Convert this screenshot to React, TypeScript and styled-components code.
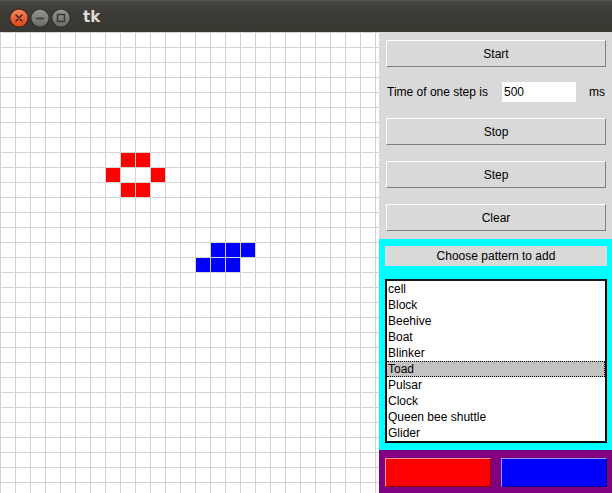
import React from "react";
import styled, { createGlobalStyle } from "styled-components";

const Global = createGlobalStyle`
  html, body { margin: 0; padding: 0; background: #d9d9d9; }
  body { width: 612px; height: 493px; overflow: hidden; font-family: "Liberation Sans", Arial, sans-serif; }
  * { box-sizing: border-box; }
`;

const Window = styled.div`
  width: 612px;
  height: 493px;
  display: flex;
  flex-direction: column;
`;

const TitleBar = styled.div`
  height: 32px;
  flex: none;
  display: flex;
  align-items: center;
  padding: 2px 0 0 9px;
  background: linear-gradient(#46453f, #3c3b37 40%, #37362f);
  border-top: 1px solid #55544f;
`;

const WinButtons = styled.div`
  display: flex;
  gap: 1px;
`;

const Title = styled.span`
  margin-left: 12px;
  margin-top: -2px;
  color: #dfdbd2;
  font-family: "DejaVu Sans", sans-serif;
  font-weight: bold;
  font-size: 15px;
`;

const Body = styled.div`
  flex: 1;
  display: flex;
  min-height: 0;
`;

const Board = styled.div`
  width: 379px;
  height: 461px;
  flex: none;
  overflow: hidden;
  display: grid;
  grid-template-columns: repeat(26, 15px);
  grid-template-rows: repeat(31, 15px);
  background-color: #ffffff;
  background-image: linear-gradient(to right, #d3d3d3 1px, transparent 1px),
    linear-gradient(to bottom, #d3d3d3 1px, transparent 1px);
  background-size: 15px 15px;
`;

const Cell = styled.div<{ $color: string }>`
  width: 14px;
  height: 14px;
  margin: 1px 0 0 1px;
  background: ${(p) => p.$color};
`;

const Panel = styled.div`
  flex: 1;
  display: flex;
  flex-direction: column;
  background: #d9d9d9;
  padding-top: 8px;
`;

const Controls = styled.div`
  display: flex;
  flex-direction: column;
  gap: 16px;
  padding: 0 7px 0 7px;
`;

const Button = styled.div`
  width: 220px;
  height: 27px;
  display: flex;
  align-items: center;
  justify-content: center;
  font-size: 12px;
  color: #000;
  background: #d9d9d9;
  border-top: 1px solid #ffffff;
  border-left: 1px solid #ffffff;
  border-right: 1px solid #7f7f7f;
  border-bottom: 1px solid #7f7f7f;
`;

const TimeRow = styled.div`
  height: 20px;
  display: flex;
  align-items: center;
  font-size: 12px;
  margin: -1px 0 0 1px;
`;

const TimeLabel = styled.span`
  width: 115px;
`;

const Entry = styled.div`
  width: 74px;
  height: 20px;
  background: #ffffff;
  display: flex;
  align-items: center;
  padding-left: 2px;
  font-size: 12px;
`;

const Unit = styled.span`
  margin-left: 13px;
`;

const PatternFrame = styled.div`
  margin-top: 8px;
  background: #00ffff;
  padding: 7px 6px 7px 6px;
  display: flex;
  flex-direction: column;
`;

const PatternLabel = styled.div`
  height: 20px;
  background: #d9d9d9;
  display: flex;
  align-items: center;
  justify-content: center;
  font-size: 12px;
`;

const ListBox = styled.div`
  margin-top: 13px;
  width: 222px;
  height: 164px;
  border: 2px solid #000;
  border-top-color: #1a1a1a;
  background: #ffffff;
  display: flex;
  flex-direction: column;
`;

const Item = styled.div<{ $selected?: boolean }>`
  height: 16px;
  flex: none;
  font-size: 12px;
  line-height: 15px;
  padding-left: 1px;
  color: #000;
  background: ${(p) => (p.$selected ? "#c3c3c3" : "transparent")};
  border: 1px dotted ${(p) => (p.$selected ? "#000" : "transparent")};
  border-left-width: 0;
  display: flex;
  align-items: center;
`;

const ColorBar = styled.div`
  flex: 1;
  background: #800080;
  display: flex;
  gap: 10px;
  padding: 8px 5px 7px 6px;
`;

const Swatch = styled.div<{ $color: string; $light: string; $dark: string }>`
  width: 106px;
  height: 29px;
  background: ${(p) => p.$color};
  border: 1px solid;
  border-color: ${(p) => `${p.$light} ${p.$dark} ${p.$dark} ${p.$light}`};
`;

const CircleBtn = ({ kind }: { kind: "close" | "min" | "max" }) => {
  const id = `g-${kind}`;
  const isClose = kind === "close";
  return (
    <svg width="20" height="20" viewBox="0 0 20 20">
      <defs>
        <linearGradient id={id} x1="0" y1="0" x2="0" y2="1">
          <stop offset="0" stopColor={isClose ? "#f5875f" : "#95948f"} />
          <stop offset="1" stopColor={isClose ? "#dc4514" : "#6c6b66"} />
        </linearGradient>
      </defs>
      <circle cx="10" cy="10" r="9.5" fill={isClose ? "#3a2018" : "#2e2d29"} />
      <circle cx="10" cy="10" r="8.6" fill={`url(#${id})`} />
      {kind === "close" && (
        <path d="M7 7 L13 13 M13 7 L7 13" stroke="#3b1d12" strokeWidth="1.4" strokeLinecap="round" />
      )}
      {kind === "min" && <path d="M6 10.5 H14" stroke="#3a3935" strokeWidth="1.6" />}
      {kind === "max" && (
        <rect x="6.5" y="6.5" width="7" height="7" fill="none" stroke="#3a3935" strokeWidth="1.5" />
      )}
    </svg>
  );
};

const cells: { c: number; r: number; color: string }[] = [
  { c: 8, r: 8, color: "#ff0000" },
  { c: 9, r: 8, color: "#ff0000" },
  { c: 7, r: 9, color: "#ff0000" },
  { c: 10, r: 9, color: "#ff0000" },
  { c: 8, r: 10, color: "#ff0000" },
  { c: 9, r: 10, color: "#ff0000" },
  { c: 14, r: 14, color: "#0000ff" },
  { c: 15, r: 14, color: "#0000ff" },
  { c: 16, r: 14, color: "#0000ff" },
  { c: 13, r: 15, color: "#0000ff" },
  { c: 14, r: 15, color: "#0000ff" },
  { c: 15, r: 15, color: "#0000ff" },
];

const patterns = [
  "cell",
  "Block",
  "Beehive",
  "Boat",
  "Blinker",
  "Toad",
  "Pulsar",
  "Clock",
  "Queen bee shuttle",
  "Glider",
];

export default function App() {
  return (
    <>
      <Global />
      <Window>
        <TitleBar>
          <WinButtons>
            <CircleBtn kind="close" />
            <CircleBtn kind="min" />
            <CircleBtn kind="max" />
          </WinButtons>
          <Title>tk</Title>
        </TitleBar>
        <Body>
          <Board>
            {cells.map((cell, i) => (
              <Cell
                key={i}
                $color={cell.color}
                style={{ gridColumn: cell.c + 1, gridRow: cell.r + 1 }}
              />
            ))}
          </Board>
          <Panel>
            <Controls>
              <Button>Start</Button>
              <TimeRow>
                <TimeLabel>Time of one step is</TimeLabel>
                <Entry>500</Entry>
                <Unit>ms</Unit>
              </TimeRow>
              <Button>Stop</Button>
              <Button>Step</Button>
              <Button>Clear</Button>
            </Controls>
            <PatternFrame>
              <PatternLabel>Choose pattern to add</PatternLabel>
              <ListBox>
                {patterns.map((p) => (
                  <Item key={p} $selected={p === "Toad"}>
                    {p}
                  </Item>
                ))}
              </ListBox>
            </PatternFrame>
            <ColorBar>
              <Swatch $color="#ff0000" $light="#ff9999" $dark="#8b0000" />
              <Swatch $color="#0000ff" $light="#9999ff" $dark="#00008b" />
            </ColorBar>
          </Panel>
        </Body>
      </Window>
    </>
  );
}
